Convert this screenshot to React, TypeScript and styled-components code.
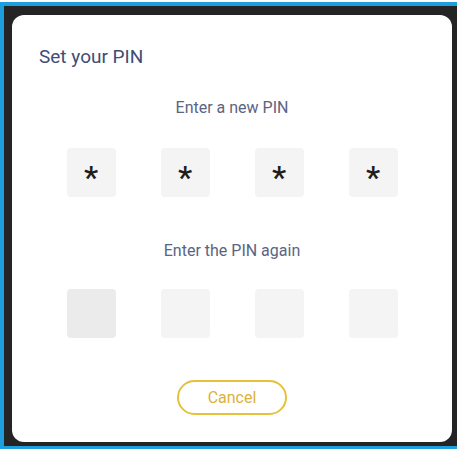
import React from 'react'
import styled, { createGlobalStyle } from 'styled-components'

const GlobalStyle = createGlobalStyle`
  html, body {
    margin: 0;
    padding: 0;
    background: #ffffff;
    font-family: Roboto, "Liberation Sans", sans-serif;
  }
`

const Frame = styled.div`
  box-sizing: border-box;
  margin-top: 2px;
  height: 447px;
  border-top: 4px solid #1d9fdd;
  border-left: 4px solid #1d9fdd;
  border-bottom: 3px solid #1d9fdd;
  background: #242424;
  padding: 9px 5px 4px 8px;
`

const Modal = styled.div`
  box-sizing: border-box;
  width: 440px;
  height: 427px;
  background: #ffffff;
  border-radius: 12px;
  padding: 32px 0 0;
  display: flex;
  flex-direction: column;
  align-items: center;
`

const Title = styled.h2`
  align-self: flex-start;
  margin: 0 0 0 27px;
  font-size: 19px;
  line-height: 20px;
  font-weight: 400;
  color: #414c74;
`

const Label = styled.div<{ $top: number }>`
  margin-top: ${p => p.$top}px;
  font-size: 16px;
  line-height: 16px;
  color: #5b6482;
`

const DigitRow = styled.div<{ $top: number }>`
  margin-top: ${p => p.$top}px;
  display: flex;
  gap: 45px;
`

const Digit = styled.div<{ $focused?: boolean }>`
  width: 49px;
  height: 49px;
  border-radius: 4px;
  background: ${p => (p.$focused ? '#ebebeb' : '#f4f4f4')};
  display: flex;
  align-items: center;
  justify-content: center;
  font-size: 32px;
  font-weight: 500;
  color: #1e1e1e;
  padding-top: 9px;
  box-sizing: border-box;
`

const CancelButton = styled.button`
  margin-top: 42px;
  width: 110px;
  height: 35px;
  border: 2px solid #e6c13a;
  border-radius: 18px;
  background: #ffffff;
  color: #dcb23a;
  font-family: Roboto, "Liberation Sans", sans-serif;
  font-size: 16px;
  cursor: pointer;
`

export default function App() {
  return (
    <>
      <GlobalStyle />
      <Frame>
        <Modal>
          <Title>Set your PIN</Title>
          <Label $top={33}>Enter a new PIN</Label>
          <DigitRow $top={32}>
            {[0, 1, 2, 3].map(i => (
              <Digit key={i}>*</Digit>
            ))}
          </DigitRow>
          <Label $top={46}>Enter the PIN again</Label>
          <DigitRow $top={30}>
            {[0, 1, 2, 3].map(i => (
              <Digit key={i} $focused={i === 0} />
            ))}
          </DigitRow>
          <CancelButton>Cancel</CancelButton>
        </Modal>
      </Frame>
    </>
  )
}
